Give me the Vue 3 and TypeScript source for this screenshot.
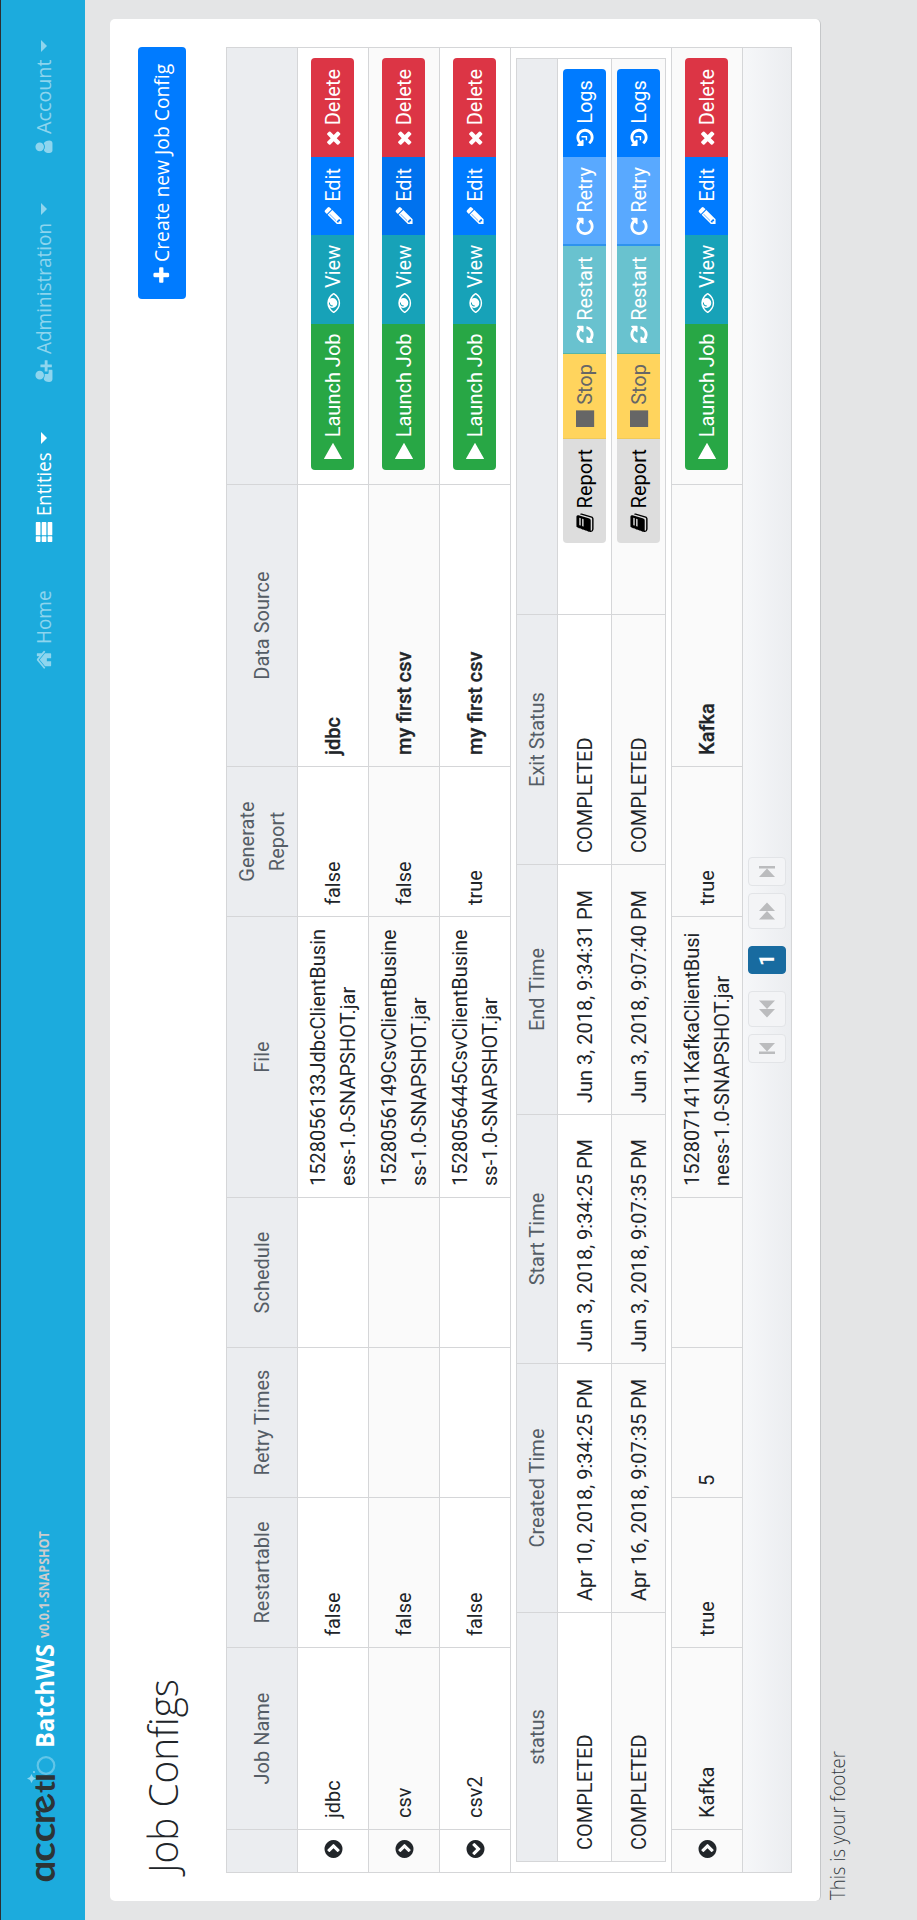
<script setup lang="ts">
interface Icon { w: number; x: number; d: string }
interface Action { label: string; icon: string; kind: string; w: number }
interface Execution { status: string; created: string; start: string; end: string; exit: string }
interface Job { name: string; restartable: string; retry: string; file: string[]; report: string; source: string; open?: boolean; hovered?: string }

const icons: Record<string, Icon> = {
  plus: { w: 1792, x: 0, d: 'M1600 736v192q0 40-28 68t-68 28h-416v416q0 40-28 68t-68 28h-192q-40 0-68-28t-28-68v-416h-416q-40 0-68-28t-28-68v-192q0-40 28-68t68-28h416v-416q0-40 28-68t68-28h192q40 0 68 28t28 68v416h416q40 0 68 28t28 68z' },
  times: { w: 1408, x: 192, d: 'M1490 1322q0 40-28 68l-136 136q-28 28-68 28t-68-28l-294-294-294 294q-28 28-68 28t-68-28l-136-136q-28-28-28-68t28-68l294-294-294-294q-28-28-28-68t28-68l136-136q28-28 68-28t68 28l294 294 294-294q28-28 68-28t68 28l136 136q28 28 28 68t-28 68l-294 294 294 294q28 28 28 68z' },
  eye: { w: 1792, x: 0, d: 'M1664 960q-152-236-381-353 61 104 61 225 0 185-131.5 316.5t-316.5 131.5-316.5-131.5-131.5-316.5q0-121 61-225-229 117-381 353 133 205 333.5 326.5t434.5 121.5 434.5-121.5 333.5-326.5zm-720-384q0-20-14-34t-34-14q-125 0-214.5 89.5t-89.5 214.5q0 20 14 34t34 14 34-14 14-34q0-86 61-147t147-61q20 0 34-14t14-34zm848 384q0 34-20 69-140 230-376.5 368.5t-499.5 138.5-499.5-139-376.5-368q-20-35-20-69t20-69q140-229 376.5-368t499.5-139 499.5 139 376.5 368q20 35 20 69z' },
  pencil: { w: 1536, x: 128, d: 'M491 1536l91-91-235-235-91 91v107h128v128h107zm523-928q0-22-22-22-10 0-17 7l-542 542q-7 7-7 17 0 22 22 22 10 0 17-7l542-542q7-7 7-17zm-54-192l416 416-832 832h-416v-416zm683 96q0 53-37 90l-166 166-416-416 166-165q36-38 90-38 53 0 91 38l235 234q37 39 37 91z' },
  refresh: { w: 1536, x: 128, d: 'M1639 1056q0 5-1 7-64 268-268 434.5t-478 166.5q-146 0-282.5-55t-243.5-157l-129 129q-19 19-45 19t-45-19-19-45v-448q0-26 19-45t45-19h448q26 0 45 19t19 45-19 45l-137 137q71 66 161 102t187 36q134 0 250-65t186-179q11-17 53-117 8-23 30-23h192q13 0 22.5 9.5t9.5 22.5zm25-800v448q0 26-19 45t-45 19h-448q-26 0-45-19t-19-45 19-45l138-138q-148-137-349-137-134 0-250 65t-186 179q-11 17-53 117-8 23-30 23h-199q-13 0-22.5-9.5t-9.5-22.5v-7q65-268 270-434.5t480-166.5q146 0 284 55.5t245 156.5l130-129q19-19 45-19t45 19 19 45z' },
  repeat: { w: 1536, x: 128, d: 'M1664 256v448q0 26-19 45t-45 19h-448q-42 0-59-40-17-39 14-69l138-138q-148-137-349-137-104 0-198.5 40.5t-163.5 109.5-109.5 163.5-40.5 198.5 40.5 198.5 109.5 163.5 163.5 109.5 198.5 40.5q119 0 225-52t179-147q7-10 23-12 15 0 25 9l137 138q9 8 9.5 20.5t-7.5 22.5q-109 132-264 204.5t-327 72.5q-156 0-298-61t-245-164-164-245-61-298 61-298 164-245 245-164 298-61q147 0 284.5 55.5t244.5 156.5l130-129q29-31 70-14 39 17 39 59z' },
  history: { w: 1536, x: 128, d: 'M1664 896q0 156-61 298t-164 245-245 164-298 61q-172 0-327-72.5t-264-204.5q-7-10-6.5-22.5t8.5-20.5l137-138q10-9 25-9 16 2 23 12 73 95 179 147t225 52q104 0 198.5-40.5t163.5-109.5 109.5-163.5 40.5-198.5-40.5-198.5-109.5-163.5-163.5-109.5-198.5-40.5q-98 0-188 35.5t-160 101.5l137 138q31 30 14 69-17 40-59 40h-448q-26 0-45-19t-19-45v-448q0-42 40-59 39-17 69 14l130 129q107-101 244.5-156.5t284.5-55.5q156 0 298 61t245 164 164 245 61 298zm-640-288v448q0 14-9 23t-23 9h-320q-14 0-23-9t-9-23v-64q0-14 9-23t23-9h224v-352q0-14 9-23t23-9h64q14 0 23 9t9 23z' },
  play: { w: 1408, x: 192, d: 'M1640 896l-1392 800q-23 13-39.500 3t-16.500-36v-1534q0-26 16.500-36t39.500 3z' },
  stop: { w: 1536, x: 128, d: 'M128 90h1490v1626h-1490z' },
  book: { w: 1664, x: 64, d: 'M1703 478q40 57 18 129l-275 906q-19 64-76.5 107.5t-122.5 43.5h-923q-77 0-148.5-53.5t-99.5-131.5q-24-67-2-127 0-4 3-27t4-37q1-8-3-21.5t-3-19.5q2-11 8-21t16.5-23.5 16.5-23.5q23-38 45-91.5t30-91.5q3-10 .5-30t-.5-28q3-11 17-28t17-23q21-36 42-92t25-90q1-9-2.5-32t.5-28q4-13 22-30.5t22-22.5q19-26 42.5-84.5t27.5-96.5q1-8-3-25.5t-2-26.5q2-8 9-18t18-23 17-21q8-12 16.5-30.5t15-35 16-36 19.5-32 26.5-23.5 36-11.5 47.5 5.5l-1 3q38-9 51-9h761q74 0 114 56t18 130l-274 906q-36 119-71.5 153.5t-128.5 34.5h-869q-27 0-38 15-11 16-1 43 24 70 144 70h923q29 0 56-15.5t35-41.5l300-987q7-22 5-57 38 15 59 43zm-1064 2q-4 13 2 22.5t20 9.5h608q13 0 25.5-9.5t16.5-22.5l21-64q4-13-2-22.5t-20-9.5h-608q-13 0-25.5 9.5t-16.5 22.5zm-83 256q-4 13 2 22.5t20 9.5h608q13 0 25.5-9.5t16.5-22.5l21-64q4-13-2-22.5t-20-9.5h-608q-13 0-25.5 9.5t-16.5 22.5z' },
  home: { w: 1664, x: 64, d: 'M1472 992v480q0 26-19 45t-45 19h-384v-384h-256v384h-384q-26 0-45-19t-19-45v-480q0-1 .5-3t.5-3l575-474 575 474q1 2 1 6zm223-69l-62 74q-8 9-21 11h-3q-13 0-21-7l-692-577-692 577q-12 8-24 7-13-2-21-11l-62-74q-8-10-7-23.5t11-21.5l719-599q32-26 76-26t76 26l244 204v-195q0-14 9-23t23-9h192q14 0 23 9t9 23v408l219 182q10 8 11 21.5t-7 23.5z' },
  list: { w: 1792, x: 0, d: 'M0 220q0-60 60-60h392q60 0 60 60v300q0 60-60 60h-392q-60 0-60-60zM600 220q0-60 60-60h1072q60 0 60 60v300q0 60-60 60h-1072q-60 0-60-60zM0 750q0-60 60-60h392q60 0 60 60v300q0 60-60 60h-392q-60 0-60-60zM600 750q0-60 60-60h1072q60 0 60 60v300q0 60-60 60h-1072q-60 0-60-60zM0 1280q0-60 60-60h392q60 0 60 60v300q0 60-60 60h-392q-60 0-60-60zM600 1280q0-60 60-60h1072q60 0 60 60v300q0 60-60 60h-1072q-60 0-60-60z' },
  circle: { w: 1536, x: 128, d: 'M845 1395l454-454q19-19 19-45t-19-45l-454-454q-19-19-45-19t-45 19l-102 102q-19 19-19 45t19 45l307 307-307 307q-19 19-19 45t19 45l102 102q19 19 45 19t45-19zm819-499q0 209-103 385.5t-279.5 279.5-385.5 103-385.500-103-279.500-279.500-103-385.500 103-385.500 279.500-279.500 385.500-103 385.500 103 279.500 279.500 103 385.500z' },
  user: { w: 1280, x: 256, d: 'M896 980q-160 0-290-100-140 20-210 190-60 140-60 310 0 120 66 195t170 80h648q104-5 170-80t66-195q0-170-60-310-70-170-210-190-130 100-290 100zM896 128a384 384 0 1 0 .1 768a384 384 0 1 0-.1-768z' },
  userPlus: { w: 2048, x: 0, d: 'M704 896a384 384 0 1 0-.1-768a384 384 0 1 0 .1 768zM1664 960h352q32 0 32 32v192q0 32-32 32h-352v352q0 32-32 32h-192q-32 0-32-32v-352h-352q-32 0-32-32v-192q0-32 32-32h352v-352q0-32 32-32h192q32 0 32 32zM928 1312q-52 0-90-38t-38-90v-192q0-20 8-42-50 10-104 10-160 0-290-90-160 0-250 160-70 130-70 330 0 140 66 215t178 80h740q60 0 110-25v-318z' },
}

const nav = [
  { label: 'Home', icon: 'home', cls: 'n-home', text: 52, caret: false },
  { label: 'Entities', icon: 'list', cls: 'n-entities', text: 62, caret: true },
  { label: 'Administration', icon: 'userPlus', cls: 'n-admin', text: 129, caret: true },
  { label: 'Account', icon: 'user', cls: 'n-account', text: 73, caret: true },
]
const heads = ['', 'Job Name', 'Restartable', 'Retry Times', 'Schedule', 'File', 'Generate Report', 'Data Source', '']
const subHeads = ['status', 'Created Time', 'Start Time', 'End Time', 'Exit Status', '']
const jobs: Job[] = [
  { name: 'jdbc', restartable: 'false', retry: '', file: ['1528056133JdbcClientBusin', 'ess-1.0-SNAPSHOT.jar'], report: 'false', source: 'jdbc' },
  { name: 'csv', restartable: 'false', retry: '', file: ['1528056149CsvClientBusine', 'ss-1.0-SNAPSHOT.jar'], report: 'false', source: 'my first csv', hovered: 'Edit' },
  { name: 'csv2', restartable: 'false', retry: '', file: ['1528056445CsvClientBusine', 'ss-1.0-SNAPSHOT.jar'], report: 'true', source: 'my first csv', open: true },
  { name: 'Kafka', restartable: 'true', retry: '5', file: ['1528071411KafkaClientBusi', 'ness-1.0-SNAPSHOT.jar'], report: 'true', source: 'Kafka' },
]
const runs: Execution[] = [
  { status: 'COMPLETED', created: 'Apr 10, 2018, 9:34:25 PM', start: 'Jun 3, 2018, 9:34:25 PM', end: 'Jun 3, 2018, 9:34:31 PM', exit: 'COMPLETED' },
  { status: 'COMPLETED', created: 'Apr 16, 2018, 9:07:35 PM', start: 'Jun 3, 2018, 9:07:35 PM', end: 'Jun 3, 2018, 9:07:40 PM', exit: 'COMPLETED' },
]
const jobActions: Action[] = [
  { label: 'Launch Job', icon: 'play', kind: 'success', w: 146 },
  { label: 'View', icon: 'eye', kind: 'info', w: 89 },
  { label: 'Edit', icon: 'pencil', kind: 'primary', w: 78 },
  { label: 'Delete', icon: 'times', kind: 'danger', w: 99 },
]
const runActions: Action[] = [
  { label: 'Report', icon: 'book', kind: 'report', w: 104 },
  { label: 'Stop', icon: 'stop', kind: 'halt', w: 85 },
  { label: 'Restart', icon: 'refresh', kind: 'restart', w: 108 },
  { label: 'Retry', icon: 'repeat', kind: 'retry', w: 89 },
  { label: 'Logs', icon: 'history', kind: 'primary', w: 88 },
]
const pager = [
  { cls: 'edge', d: 'M7 1h2.500v16h-2.500zM18 1v16l-8.500-8z' },
  { cls: 'step', d: 'M13 1v16l-8.500-8zM21.500 1v16l-8.500-8z' },
  { cls: 'current', d: '' },
  { cls: 'step', d: 'M4.500 1v16l8.500-8zM13 1v16l8.500-8z' },
  { cls: 'edge', d: 'M7 1v16l8.500-8zM15.500 1h2.500v16h-2.500z' },
]

const box = (i: Icon) => `${i.x} 0 ${i.w} 1792`
const iconWidth = (i: Icon) => (i.w / 1792) * 20

// Condenses a label horizontally so that it spans the given number of pixels.
const vFit = {
  mounted(el: HTMLElement, binding: { value: number }) {
    const natural = el.offsetWidth
    el.style.transform = `scaleX(${binding.value / natural})`
    el.style.marginRight = `${binding.value - natural}px`
  },
}
</script>

<template>
  <div class="viewport">
    <div class="page">
      <header class="navbar">
        <div class="brand">
          <svg class="logo" width="126" height="34" viewBox="0 0 126 34" role="img" aria-label="accretio">
            <g class="logo-word">
              <text x="-1.500" y="28.500" textLength="22" lengthAdjust="spacingAndGlyphs">ɑ</text>
              <text x="19" y="28.500" textLength="20" lengthAdjust="spacingAndGlyphs">c</text>
              <text x="38.500" y="28.500" textLength="20" lengthAdjust="spacingAndGlyphs">c</text>
              <text x="57" y="28.500">r</text>
              <text x="67.500" y="28.500" transform="rotate(-22 78 19)">e</text>
              <text class="short" x="88" y="28.500" textLength="12" lengthAdjust="spacingAndGlyphs">t</text>
              <text x="99" y="28.500" textLength="9" lengthAdjust="spacingAndGlyphs">ı</text>
            </g>
            <circle cx="115.500" cy="20" r="8.300" />
            <path d="M102.500 1l1.500 3 3 1.500-3 1.500-1.500 3-1.500-3-3-1.500 3-1.500z" />
            <circle class="dot" cx="109" cy="8" r="1" />
          </svg>
          <span v-fit="104" class="product">BatchWS</span>
          <span v-fit="107" class="version">v0.0.1-SNAPSHOT</span>
        </div>
        <nav>
          <a v-for="n in nav" :key="n.label" :class="n.cls">
            <svg :viewBox="box(icons[n.icon])" :style="{ width: iconWidth(icons[n.icon]) + 'px' }"><path :d="icons[n.icon].d" /></svg>
            <span v-fit="n.text + 2">{{ n.label }}</span>
            <i v-if="n.caret" class="caret"></i>
          </a>
        </nav>
      </header>

      <main class="card">
        <div class="title-row">
          <h2><span v-fit="194">Job Configs</span></h2>
          <button class="create">
            <svg :viewBox="box(icons.plus)"><path :d="icons.plus.d" /></svg>
            <span v-fit="198">Create new Job Config</span>
          </button>
        </div>

        <div class="table">
          <div class="row head">
            <div v-for="(h, i) in heads" :key="i" class="cell"><span>{{ h }}</span></div>
          </div>
          <template v-for="(j, i) in jobs" :key="j.name">
            <div class="row" :class="{ odd: i % 2 }">
              <div class="cell toggle">
                <svg :viewBox="box(icons.circle)" :class="{ open: j.open }"><path :d="icons.circle.d" /></svg>
              </div>
              <div class="cell">{{ j.name }}</div>
              <div class="cell">{{ j.restartable }}</div>
              <div class="cell">{{ j.retry }}</div>
              <div class="cell"></div>
              <div class="cell file">{{ j.file[0] }}<br>{{ j.file[1] }}</div>
              <div class="cell">{{ j.report }}</div>
              <div class="cell source">{{ j.source }}</div>
              <div class="cell actions">
                <div class="group">
                  <button v-for="a in jobActions" :key="a.label" :class="[a.kind, { hovered: j.hovered === a.label }]" :style="{ width: a.w + 'px' }">
                    <svg :viewBox="box(icons[a.icon])" :style="{ width: iconWidth(icons[a.icon]) + 'px' }"><path :d="icons[a.icon].d" /></svg>
                    <span>{{ a.label }}</span>
                  </button>
                </div>
              </div>
            </div>
            <div v-if="j.open" class="expansion">
              <div class="subtable">
                <div class="subrow head">
                  <div v-for="(h, k) in subHeads" :key="k" class="cell"><span>{{ h }}</span></div>
                </div>
                <div v-for="(r, k) in runs" :key="k" class="subrow" :class="{ odd: k % 2 }">
                  <div class="cell">{{ r.status }}</div>
                  <div class="cell">{{ r.created }}</div>
                  <div class="cell">{{ r.start }}</div>
                  <div class="cell">{{ r.end }}</div>
                  <div class="cell">{{ r.exit }}</div>
                  <div class="cell actions">
                    <div class="group">
                      <button v-for="a in runActions" :key="a.label" :class="a.kind" :style="{ width: a.w + 'px' }">
                        <svg :viewBox="box(icons[a.icon])" :style="{ width: iconWidth(icons[a.icon]) + 'px' }"><path :d="icons[a.icon].d" /></svg>
                        <span>{{ a.label }}</span>
                      </button>
                    </div>
                  </div>
                </div>
              </div>
            </div>
          </template>
          <div class="pager">
            <span v-for="(p, i) in pager" :key="i" :class="p.cls">
              <svg v-if="p.d" width="26" height="18" viewBox="0 0 26 18"><path :d="p.d" /></svg>
              <b v-else>1</b>
            </span>
          </div>
        </div>
      </main>
      <footer><span v-fit="149">This is your footer</span></footer>
    </div>
  </div>
</template>

<style>
body { margin: 0; }
</style>

<style scoped>
* { box-sizing: border-box; }
.viewport { width: 917px; height: 1920px; overflow: hidden; background: #e4e5e6; }
.page {
  width: 1920px; height: 917px; transform-origin: 0 0; transform: translateY(1920px) rotate(-90deg);
  background: #e4e5e6; color: #212529; font-family: "Open Sans", sans-serif; font-size: 20px; line-height: 30px;
}
svg { display: block; fill: currentColor; flex: none; height: 20px; overflow: visible; }
.brand > span, nav span, h2 span, .create span, footer span { display: inline-block; transform-origin: 0 50%; white-space: nowrap; }
.navbar {
  height: 85px; border-top: 1px solid #2b2f33; background: #1cabdd; display: flex; justify-content: space-between;
  padding-left: 39px; padding-right: 40px; color: #fff;
}
.brand { display: flex; align-items: flex-start; padding-top: 25px; }
.logo { height: 34px; }
.logo-word { fill: #2d3436; font: 700 36px Lato, sans-serif; }
.logo-word .short { font-size: 28px; }
.logo circle { fill: none; stroke: #62c5e8; stroke-width: 2.200; }
.logo path, .logo .dot { fill: #8ad5ef; stroke: none; }
.product { margin-left: 7px; font-weight: 700; font-size: 25px; line-height: 36px; }
.version { margin-left: 6px; font-weight: 700; font-size: 14px; line-height: 20px; margin-top: 8px; color: #ccc; }
nav { display: flex; align-items: flex-start; padding-top: 28px; }
nav a { display: flex; align-items: center; color: rgba(255, 255, 255, .5); height: 30px; white-space: nowrap; }
nav a.n-home { width: 127px; }
nav a.n-entities { width: 159px; color: #fff; }
nav a.n-admin { width: 229px; }
nav a.n-account { width: 114px; }
nav svg { margin-right: 6px; }
.caret { margin-left: auto; border: 6px solid transparent; border-top-color: currentColor; border-bottom: 0; }
.n-entities .caret { margin-right: 49px; }
.n-admin .caret { margin-right: 49px; }
.card { margin: 25px 19px 0; height: 711px; background: #fff; border-radius: 5px; border-bottom: 1px solid #c5c7c9; padding: 28px 28px 0; }
.title-row { display: flex; justify-content: space-between; height: 88px; }
h2 { margin: 0; font-size: 40px; font-weight: 300; line-height: 48px; padding-top: 1px; color: #212529; white-space: nowrap; }
button { border: 0; margin: 0; font: inherit; color: #fff; display: flex; align-items: center; white-space: nowrap; }
.create { width: 252px; height: 48px; border-radius: 4px; background: #007bff; padding: 0 0 0 14px; }
.create svg { width: 20px; margin-right: 3px; }
.table { width: 1826px; height: 566px; border: 1px solid #d5d6d8; font-family: Roboto, sans-serif; background: #fff; }
.row { display: grid; grid-template-columns: 43px 182px 150px 150px 150px 281px 150px 282px 436px; height: 71px; border-bottom: 1px solid #d5d6d8; }
.cell { border-right: 1px solid #d5d6d8; padding-left: 11px; display: flex; align-items: center; white-space: nowrap; }
.cell:last-child { border-right: 0; }
.odd { background: #fafafa; }
.head { background: #ebedf0; color: #555d66; }
.head .cell { justify-content: center; text-align: center; white-space: normal; padding: 0 11px; }
.cell.toggle { padding: 0 0 0 14px; }
.toggle svg { width: 18px; height: 21px; }
.toggle svg.open { transform: rotate(90deg); }
.source { font-weight: 500; -webkit-text-stroke: .3px currentColor; }
.cell.actions { padding: 13px 0 0 14px; align-items: flex-start; }
.group { display: flex; height: 43px; border-radius: 4px; overflow: hidden; }
.group button { padding: 0 0 0 11px; }
.group svg { margin-right: 5px; }
.group .success svg { margin-right: 6px; }
.group .success { background: #28a745; }
.group .info { background: #17a2b8; }
.group .primary { background: #007bff; }
.group .primary.hovered { background: #0072ee; }
.group .danger { background: #dc3545; }
.group .report { background: #ddd; color: #000; }
.group .halt { background: #ffd45d; color: #666; border-left: 1px solid #efc95b; }
.group .restart { background: #69c2cf; border-left: 1px solid #56b5a5; padding-left: 10px; }
.group .retry { background: #59a9ff; border-left: 2px solid #2e93ee; padding-left: 9px; }
.expansion { height: 161px; border-bottom: 1px solid #d5d6d8; padding: 5px 10px 0; }
.subtable { border: 1px solid #d5d6d8; height: 150px; }
.subrow { display: grid; grid-template-columns: 249px 249px 249px 250px 250px 555px; height: 54px; border-bottom: 1px solid #d5d6d8; }
.subrow.head { height: 41px; }
.subrow:last-child { border-bottom: 0; height: 53px; }
.subrow .cell.actions { padding: 5px 0 0 71px; }
.pager { height: 48px; background: linear-gradient(#f6f7f9, #ebedf0); display: flex; justify-content: center; align-items: center; gap: 7px; }
.pager svg { height: 18px; }
.pager span { height: 38px; border: 1px solid #e2e4e7; border-radius: 4px; background: #f3f4f6; color: #bbbcbe; display: flex; align-items: center; justify-content: center; }
.pager .edge { width: 29px; }
.pager .step { width: 36px; }
.pager .current { width: 28px; margin: 0 10px; background: #186ba0; border-color: #186ba0; color: #fff; font-family: Roboto, sans-serif; font-size: 21px; }
footer { margin-top: 2px; padding-left: 20px; font-weight: 300; color: #333a40; }
</style>
